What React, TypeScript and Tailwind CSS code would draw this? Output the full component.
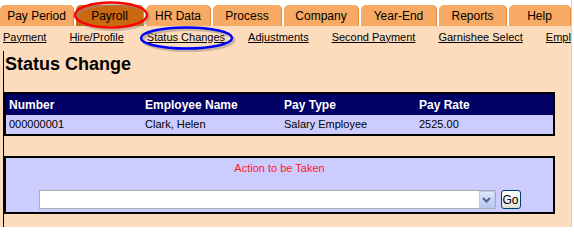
import React from 'react';

const tabs = [
  { label: 'Pay Period', w: 'w-[74px]' },
  { label: 'Payroll', w: 'w-[68px]', active: true },
  { label: 'HR Data', w: 'w-[65px]' },
  { label: 'Process', w: 'w-[69px]' },
  { label: 'Company', w: 'w-[75px]' },
  { label: 'Year-End', w: 'w-[76px]' },
  { label: 'Reports', w: 'w-[68px]' },
  { label: 'Help', w: 'w-[62px]' },
];

const subLinks = [
  'Payment',
  'Hire/Profile',
  'Status Changes',
  'Adjustments',
  'Second Payment',
  'Garnishee Select',
  'Employee',
];

const App = () => {
  return (
    <div className="relative w-[574px] h-[227px] overflow-hidden bg-white font-['Liberation_Sans',Arial,sans-serif] text-black">
      <div className="w-[572px] h-full border-r border-[#c3d3ea] flex flex-col">
        {/* Tabs */}
        <div className="flex gap-[2px] pt-[5px] h-[26px] bg-white">
          {tabs.map((t) => (
            <div
              key={t.label}
              className={`${t.w} h-[21px] shrink-0 rounded-t-[5px] border-r border-[#e48b3d] flex items-center justify-center text-[12px] ${
                t.active ? 'bg-[#c9680f]' : 'bg-[#f7aa63]'
              }`}
            >
              {t.label}
            </div>
          ))}
        </div>

        {/* Sub navigation */}
        <div className="h-[22px] bg-[#fddcbd] flex items-center pl-[3px] gap-[23px] text-[11px] whitespace-nowrap overflow-hidden">
          {subLinks.map((l) => (
            <a key={l} className="underline cursor-pointer shrink-0">
              {l}
            </a>
          ))}
        </div>

        {/* Content */}
        <div className="flex-1 bg-[#fddcbd] pt-[3px]">
          <div className="ml-[3px] h-full border-l border-black">
            <h1 className="pl-[1px] pt-[1px] h-[25px] leading-[24px] text-[18px] font-bold">Status Change</h1>

            {/* Employee table */}
            <div className="mt-[16px] w-[551px] border-2 border-black">
              <div className="grid grid-cols-[136px_139px_135px_1fr] h-[21px] items-center bg-[#000066] text-white text-[12px] font-bold">
                <div className="px-[3px]">Number</div>
                <div className="px-[3px]">Employee Name</div>
                <div className="px-[3px]">Pay Type</div>
                <div className="px-[3px]">Pay Rate</div>
              </div>
              <div className="grid grid-cols-[136px_139px_135px_1fr] h-[19px] items-center bg-[#ccccff] text-[11px]">
                <div className="px-[3px]">000000001</div>
                <div className="px-[3px]">Clark, Helen</div>
                <div className="px-[3px]">Salary Employee</div>
                <div className="px-[3px]">2525.00</div>
              </div>
            </div>

            {/* Action box */}
            <div className="mt-[20px] w-[551px] h-[58px] border-2 border-black bg-[#ccccff] flex flex-col items-center">
              <div className="pt-[4px] leading-[13px] text-[11px] text-[#ff1a1a]">Action to be Taken</div>
              <div className="mt-[15px] flex items-center gap-[5px]">
                <div className="w-[457px] h-[19px] bg-white border border-[#a5acb2] flex justify-end">
                  <div className="w-[16px] h-[17px] bg-gradient-to-b from-[#dde7fb] to-[#b5c8f0] border border-[#b9c9ef] flex items-center justify-center">
                    <svg width="9" height="6" viewBox="0 0 9 6">
                      <path d="M1 1 L4.5 4.5 L8 1" fill="none" stroke="#4d6185" strokeWidth="2" />
                    </svg>
                  </div>
                </div>
                <button className="w-[20px] h-[19px] rounded-[3px] border border-[#003c74] bg-gradient-to-b from-white to-[#e3e1d6] text-[12px] leading-none flex items-center justify-center">
                  Go
                </button>
              </div>
            </div>
          </div>
        </div>
      </div>

      {/* Annotation ovals */}
      <svg className="absolute left-0 top-0 pointer-events-none" width="574" height="227">
        <ellipse cx="113" cy="17" rx="36" ry="12.5" fill="none" stroke="#9a8a7a" strokeOpacity="0.5" strokeWidth="3" />
        <ellipse cx="111" cy="15" rx="36" ry="12.5" fill="none" stroke="#ff0000" strokeWidth="2.5" />
        <ellipse cx="188.5" cy="40" rx="45.5" ry="10.5" fill="none" stroke="#9a8a7a" strokeOpacity="0.5" strokeWidth="3" />
        <ellipse cx="186.5" cy="38" rx="45.5" ry="10.5" fill="none" stroke="#0000ff" strokeWidth="2.5" />
      </svg>
    </div>
  );
};

export default App;
